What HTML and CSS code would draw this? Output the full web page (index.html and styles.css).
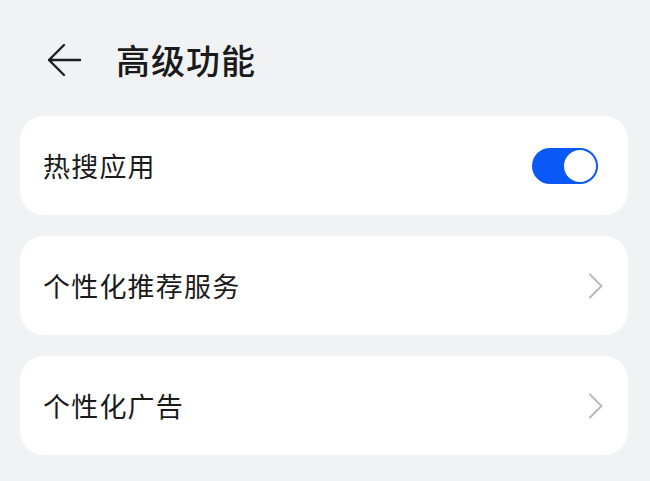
FILE: index.html
```html
<!DOCTYPE html>
<html lang="zh-CN">
<head>
<meta charset="utf-8">
<title>高级功能</title>
<link rel="stylesheet" href="styles.css">
</head>
<body>
<header class="header">
  <svg class="back" width="36" height="34" viewBox="0 0 36 34" aria-hidden="true">
    <path d="M34 17H3M18 2L3 17L18 32" fill="none" stroke="#1e1e1e" stroke-width="2.4" stroke-linecap="round" stroke-linejoin="round"/>
  </svg>
  <h1 class="title">高级功能</h1>
</header>
<main class="list">
  <div class="card card-toggle">
    <span class="label">热搜应用</span>
    <span class="switch"><span class="knob"></span></span>
  </div>
  <div class="card card-link">
    <span class="label">个性化推荐服务</span>
    <svg class="chev" width="16" height="26" viewBox="0 0 16 26" aria-hidden="true">
      <path d="M2 1.5L13.5 13L2 24.5" fill="none" stroke="#b9b9b9" stroke-width="2" stroke-linecap="round" stroke-linejoin="round"/>
    </svg>
  </div>
  <div class="card card-link">
    <span class="label">个性化广告</span>
    <svg class="chev" width="16" height="26" viewBox="0 0 16 26" aria-hidden="true">
      <path d="M2 1.5L13.5 13L2 24.5" fill="none" stroke="#b9b9b9" stroke-width="2" stroke-linecap="round" stroke-linejoin="round"/>
    </svg>
  </div>
</main>
</body>
</html>
```
FILE: styles.css
```css
html, body {
  margin: 0;
  padding: 0;
}
body {
  width: 650px;
  height: 481px;
  overflow: hidden;
  background: #f1f2f4;
  font-family: "Noto Sans CJK SC", "Noto Sans", sans-serif;
  color: #1b1b1b;
}
.header {
  box-sizing: border-box;
  height: 116px;
  padding: 4px 0 0 46px;
  display: flex;
  align-items: center;
  gap: 34px;
}
.back {
  display: block;
  flex: none;
}
.title {
  margin: 0;
  font-size: 34px;
  font-weight: 500;
  line-height: 1;
  letter-spacing: 1px;
  color: #1a1a1a;
}
.list {
  display: flex;
  flex-direction: column;
  gap: 21px;
  margin: 0 22px 0 20px;
}
.card {
  box-sizing: border-box;
  height: 99px;
  background: #ffffff;
  border-radius: 24px;
  display: flex;
  align-items: center;
  justify-content: space-between;
  padding-left: 23px;
}
.card-toggle {
  padding-right: 30px;
}
.card-link {
  padding-right: 24px;
}
.label {
  font-size: 27px;
  line-height: 1;
  letter-spacing: 1.2px;
}
.switch {
  box-sizing: border-box;
  width: 66px;
  height: 36px;
  border-radius: 18px;
  background: #0a59f7;
  padding: 2px;
  display: flex;
  justify-content: flex-end;
}
.knob {
  width: 32px;
  height: 32px;
  border-radius: 50%;
  background: #ffffff;
}
.chev {
  display: block;
}
```
